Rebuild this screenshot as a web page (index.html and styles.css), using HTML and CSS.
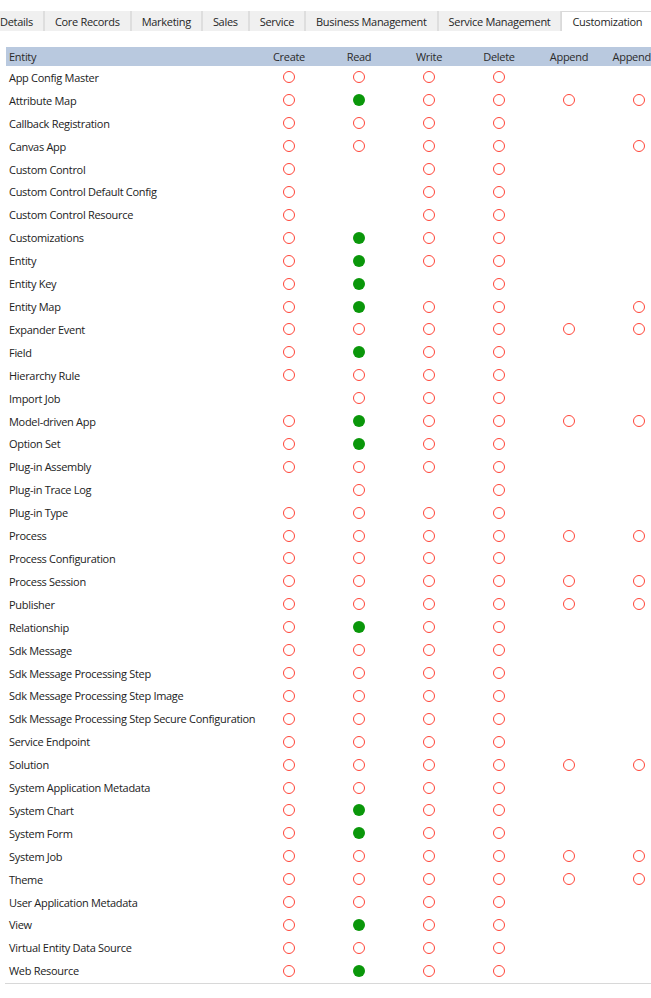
FILE: index.html
```html
<!DOCTYPE html>
<html lang="en">
<head>
    <meta charset="UTF-8">
    <meta name="viewport" content="width=device-width, initial-scale=1.0">
    <title>Security Role - Customization</title>
    <link rel="stylesheet" href="styles.css">
</head>
<body>
    <div class="tabs">
        <span class="tab">Details</span>
        <span class="tab">Core Records</span>
        <span class="tab">Marketing</span>
        <span class="tab">Sales</span>
        <span class="tab">Service</span>
        <span class="tab">Business Management</span>
        <span class="tab">Service Management</span>
        <span class="tab active">Customization</span>
    </div>

    <div class="panel">
        <div class="grid">
            <div class="row head">
                <div class="name">Entity</div>
                <div>Create</div>
                <div>Read</div>
                <div>Write</div>
                <div>Delete</div>
                <div>Append</div>
                <div>Append To</div>
            </div>
            <div id="rows"></div>
        </div>
    </div>

    <script>
        // o = no access, g = organization, - = not applicable
        // columns: create read write delete append appendTo
        const privileges = [
            ["App Config Master", "oooo--"],
            ["Attribute Map", "ogoooo"],
            ["Callback Registration", "oooo--"],
            ["Canvas App", "oooo-o"],
            ["Custom Control", "o-oo--"],
            ["Custom Control Default Config", "o-oo--"],
            ["Custom Control Resource", "o-oo--"],
            ["Customizations", "ogoo--"],
            ["Entity", "ogoo--"],
            ["Entity Key", "og-o--"],
            ["Entity Map", "ogoo-o"],
            ["Expander Event", "oooooo"],
            ["Field", "ogoo--"],
            ["Hierarchy Rule", "oooo--"],
            ["Import Job", "-ooo--"],
            ["Model-driven App", "ogoooo"],
            ["Option Set", "ogoo--"],
            ["Plug-in Assembly", "oooo--"],
            ["Plug-in Trace Log", "-o-o--"],
            ["Plug-in Type", "oooo--"],
            ["Process", "oooooo"],
            ["Process Configuration", "oooo--"],
            ["Process Session", "oooooo"],
            ["Publisher", "oooooo"],
            ["Relationship", "ogoo--"],
            ["Sdk Message", "oooo--"],
            ["Sdk Message Processing Step", "oooo--"],
            ["Sdk Message Processing Step Image", "oooo--"],
            ["Sdk Message Processing Step Secure Configuration", "oooo--"],
            ["Service Endpoint", "oooo--"],
            ["Solution", "oooooo"],
            ["System Application Metadata", "oooo--"],
            ["System Chart", "ogoo--"],
            ["System Form", "ogoo--"],
            ["System Job", "oooooo"],
            ["Theme", "oooooo"],
            ["User Application Metadata", "oooo--"],
            ["View", "ogoo--"],
            ["Virtual Entity Data Source", "oooo--"],
            ["Web Resource", "ogoo--"]
        ];

        const rows = document.getElementById("rows");
        privileges.forEach(function (item) {
            const row = document.createElement("div");
            row.className = "row";

            const name = document.createElement("div");
            name.className = "name";
            name.textContent = item[0];
            row.appendChild(name);

            item[1].split("").forEach(function (level) {
                const cell = document.createElement("div");
                if (level !== "-") {
                    const dot = document.createElement("span");
                    dot.className = level === "g" ? "dot full" : "dot none";
                    cell.appendChild(dot);
                }
                row.appendChild(cell);
            });

            rows.appendChild(row);
        });
    </script>
</body>
</html>
```

FILE: styles.css
```css
body {
    margin: 0;
    font-family: "Open Sans", "Noto Sans", sans-serif;
    font-size: 11px;
    letter-spacing: -0.3px;
    color: #222;
    background-color: #ffffff;
    overflow: hidden;
}
.tabs {
    display: flex;
    margin: 11px 0 0 -11px;
    height: 20px;
    white-space: nowrap;
}
.tab {
    display: flex;
    align-items: center;
    padding: 0 10px;
    background-color: #f0f0f0;
    border-left: 1px solid #dedede;
    border-right: 1px solid #dedede;
    color: #262626;
}
.tab.active {
    background-color: #ffffff;
    border: 1px solid #dadada;
    border-bottom: none;
}
.panel {
    margin: 16px 0 0 5px;
    padding: 0 0 1px 1px;
    border-bottom: 1px solid #d8d8d8;
    overflow: hidden;
}
.grid {
    width: 668px;
}
.row {
    display: grid;
    grid-template-columns: 248px repeat(6, 70px);
    align-items: center;
    height: 22.92px;
    text-align: center;
    white-space: nowrap;
}
.row .name {
    text-align: left;
    padding-left: 3px;
}
.row.head {
    height: 19px;
    background-color: #b9c9df;
    color: #2b2b2b;
}
.row > div {
    display: flex;
    justify-content: center;
}
.row > .name {
    justify-content: flex-start;
}
.dot {
    display: block;
    width: 12px;
    height: 12px;
    border-radius: 50%;
    box-sizing: border-box;
}
.dot.none {
    border: 1.5px solid #ff4538;
}
.dot.full {
    background-color: #0a970a;
}
```
